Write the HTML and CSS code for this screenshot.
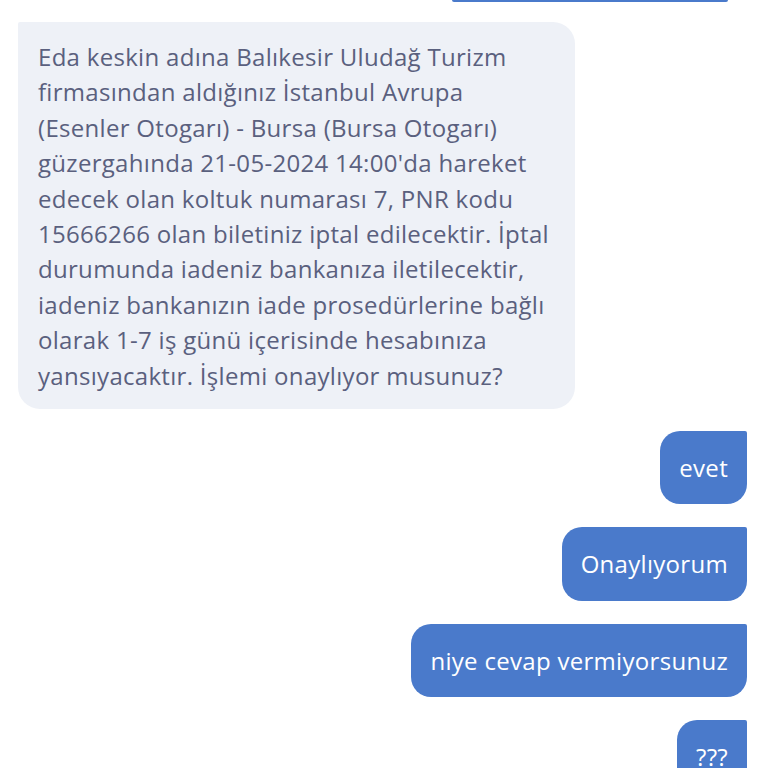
FILE: index.html
```html
<!DOCTYPE html>
<html lang="tr">
<head>
<meta charset="utf-8">
<link rel="stylesheet" href="styles.css">
</head>
<body>
<div class="chat">
  <div class="prev"></div>
  <div class="msg in">Eda keskin adına Balıkesir Uludağ Turizm<br>firmasından aldığınız İstanbul Avrupa<br>(Esenler Otogarı) - Bursa (Bursa Otogarı)<br>güzergahında 21-05-2024 14:00'da hareket<br>edecek olan koltuk numarası 7, PNR kodu<br>15666266 olan biletiniz iptal edilecektir. İptal<br>durumunda iadeniz bankanıza iletilecektir,<br>iadeniz bankanızın iade prosedürlerine bağlı<br>olarak 1-7 iş günü içerisinde hesabınıza<br>yansıyacaktır. İşlemi onaylıyor musunuz?</div>
  <div class="msg out">evet</div>
  <div class="msg out">Onaylıyorum</div>
  <div class="msg out">niye cevap vermiyorsunuz</div>
  <div class="msg out">???</div>
</div>
</body>
</html>
```
FILE: styles.css
```css
html, body {
  margin: 0;
  padding: 0;
  background: #ffffff;
  height: 768px;
  overflow: hidden;
}
body {
  font-family: "Open Sans", Lato, sans-serif;
}
.chat {
  display: flex;
  flex-direction: column;
  padding: 0 21px 0 18px;
}
.prev {
  align-self: flex-end;
  width: 276px;
  height: 2px;
  margin-right: 19px;
  background: #4a7acb;
  border-radius: 0 0 4px 4px;
}
.msg {
  font-size: 24px;
  letter-spacing: 0.3px;
  line-height: 35.4px;
}
.in {
  align-self: flex-start;
  margin-top: 20px;
  width: 557px;
  box-sizing: border-box;
  padding: 17px 18px 16px 20px;
  background: #eef1f7;
  color: #5a607e;
  border-radius: 2px 22px 22px 22px;
  white-space: nowrap;
}
.out {
  align-self: flex-end;
  background: #4a7acb;
  color: #ffffff;
  padding: 19px 19px;
  border-radius: 20px 2px 20px 20px;
  margin-top: 23px;
}
.in + .out {
  margin-top: 22px;
}
```
